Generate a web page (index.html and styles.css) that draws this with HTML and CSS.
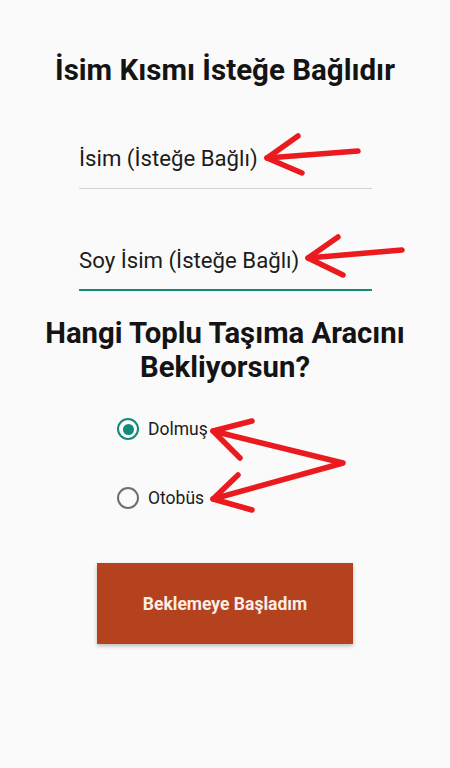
FILE: index.html
```html
<!DOCTYPE html>
<html lang="tr">
<head>
<meta charset="utf-8">
<link rel="stylesheet" href="styles.css">
</head>
<body>
<div class="screen">
  <h1 class="title">İsim Kısmı İsteğe Bağlıdır</h1>
  <div class="field">
    <div class="field-text">İsim (İsteğe Bağlı)</div>
  </div>
  <div class="field field-focused">
    <div class="field-text">Soy İsim (İsteğe Bağlı)</div>
  </div>
  <h2 class="question">Hangi Toplu Taşıma Aracını<br>Bekliyorsun?</h2>
  <div class="radios">
    <label class="radio radio-checked"><span class="radio-circle"><span class="radio-dot"></span></span><span class="radio-label">Dolmuş</span></label>
    <label class="radio"><span class="radio-circle"></span><span class="radio-label">Otobüs</span></label>
  </div>
  <div class="button-wrap">
    <div class="button">Beklemeye Başladım</div>
  </div>
  <svg class="arrows" width="450" height="768" viewBox="0 0 450 768">
    <g fill="none" stroke="#ea1a1f" stroke-width="5.5" stroke-linecap="round" stroke-linejoin="round">
      <polyline points="358,151 267,158"/>
      <polyline points="298,136 267,158 302,173"/>
      <polyline points="402,250 308,258"/>
      <polyline points="338,237 308,258 343,275"/>
      <polyline points="213,431 343,463 213,499"/>
      <polyline points="252,421 213,431 240,458"/>
      <polyline points="238,475 213,499 252,510"/>
    </g>
  </svg>
</div>
</body>
</html>
```

FILE: styles.css
```css
html, body {
  margin: 0;
  padding: 0;
  background: #fafafa;
}
.screen {
  position: relative;
  width: 450px;
  height: 768px;
  overflow: hidden;
  font-family: Roboto, "Noto Sans", sans-serif;
  color: #1a1a1a;
  display: flex;
  flex-direction: column;
  align-items: center;
}
.title {
  margin: 52px 0 0 0;
  font-size: 29.5px;
  font-weight: 700;
  line-height: 36px;
  color: #141414;
  text-align: center;
  white-space: nowrap;
}
.field {
  width: 293px;
  margin-top: 55px;
  align-self: flex-start;
  margin-left: 79px;
  border-bottom: 1px solid #d3d3d3;
  padding-bottom: 15px;
}
.field-text {
  font-size: 22.2px;
  line-height: 30px;
  color: #1c1c1c;
  white-space: nowrap;
}
.field-focused {
  margin-top: 56px;
  border-bottom: 2px solid #138a78;
  padding-bottom: 14px;
}
.question {
  margin: 25px 0 0 0;
  font-size: 29.3px;
  font-weight: 700;
  line-height: 34px;
  color: #141414;
  text-align: center;
  white-space: nowrap;
}
.radios {
  align-self: flex-start;
  margin-left: 117px;
  margin-top: 33px;
  display: flex;
  flex-direction: column;
  gap: 45px;
}
.radio {
  display: flex;
  align-items: center;
  gap: 9px;
  height: 24px;
}
.radio-circle {
  width: 22px;
  height: 22px;
  box-sizing: border-box;
  border: 2.5px solid #6f6f6f;
  border-radius: 50%;
  display: flex;
  align-items: center;
  justify-content: center;
}
.radio-checked .radio-circle {
  border-color: #138a78;
}
.radio-dot {
  width: 11px;
  height: 11px;
  border-radius: 50%;
  background: #138a78;
}
.radio-label {
  font-size: 17.5px;
  color: #1c1c1c;
}
.button-wrap {
  margin-top: 53px;
}
.button {
  width: 256px;
  height: 81px;
  background: #b4421e;
  color: #fbece6;
  font-size: 17.5px;
  font-weight: 700;
  display: flex;
  align-items: center;
  justify-content: center;
  box-shadow: 0 2px 4px rgba(0,0,0,0.25);
}
.arrows {
  position: absolute;
  left: 0;
  top: 0;
  pointer-events: none;
}
```
